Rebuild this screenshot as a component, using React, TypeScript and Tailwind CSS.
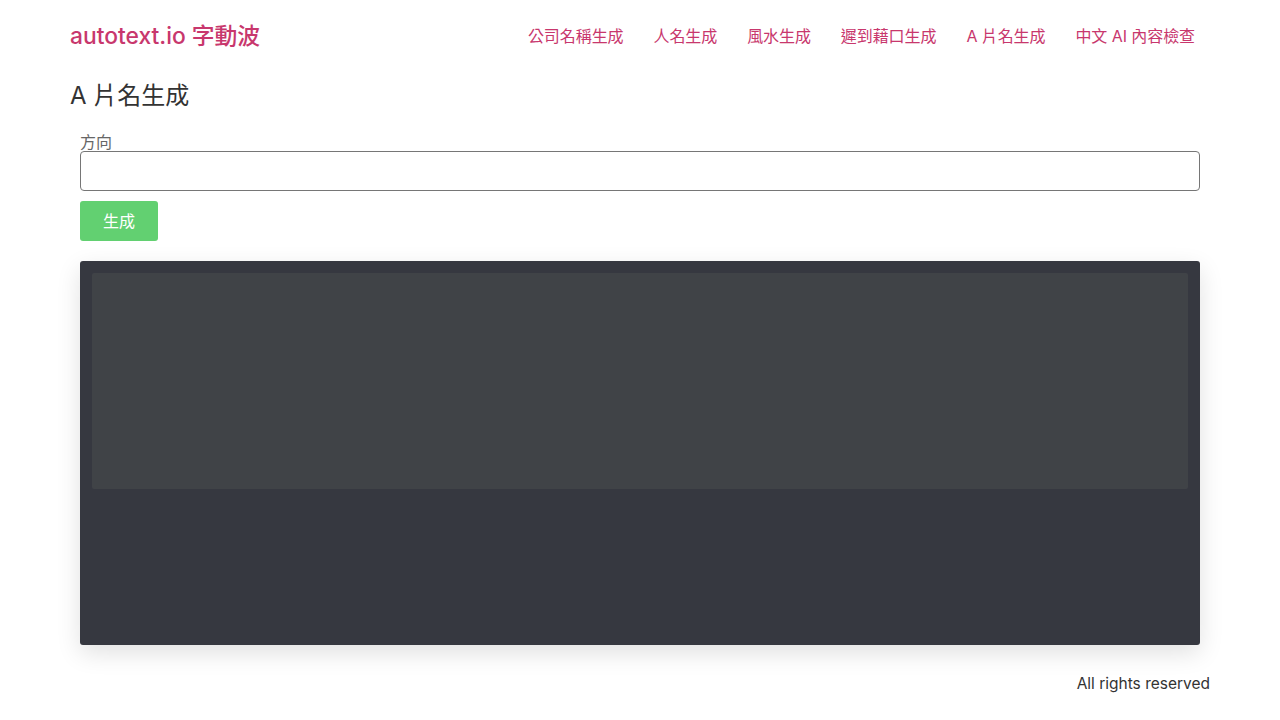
const links = ["公司名稱生成", "人名生成", "風水生成", "遲到藉口生成", "A 片名生成", "中文 AI 內容檢查"];

const App = () => (
  <div
    className="min-h-[720px] bg-white text-[#333]"
    style={{ fontFamily: 'Inter, "Noto Sans CJK TC", sans-serif' }}
  >
    <div className="mx-auto w-[1140px]">
      <header className="flex h-[72px] items-center justify-between">
        <a className="text-[22.8px] font-medium text-[#c8376d]">autotext.io 字動波</a>
        <nav className="flex">
          {links.map((l) => (
            <a key={l} className="px-[15px] text-[16px] tracking-[-0.08px] text-[#c8376d]">
              {l}
            </a>
          ))}
        </nav>
      </header>
      <h1 className="mt-[6px] text-[24px] leading-[36px] text-[#333]">A 片名生成</h1>
      <main className="px-[10px] pt-[19px]">
        <label className="block text-[16px] leading-[18px] text-[#666]">方向</label>
        <input className="block h-[40px] w-full rounded-[4px] border border-[#767676] bg-white px-3 outline-none" />
        <button className="mt-[10px] h-[40px] w-[78px] rounded-[3px] bg-[#62d071] text-[16px] text-white">
          生成
        </button>
        <div className="mt-[20px] h-[384px] rounded-[3px] bg-[#363840] p-3 shadow-[0_8px_24px_rgba(0,0,0,0.12)]">
          <div className="h-[216px] rounded-[2px] bg-[#404347]" />
        </div>
      </main>
      <footer className="flex justify-end pt-[27px] text-[15.5px] text-[#333]">All rights reserved</footer>
    </div>
  </div>
);

export default App;
